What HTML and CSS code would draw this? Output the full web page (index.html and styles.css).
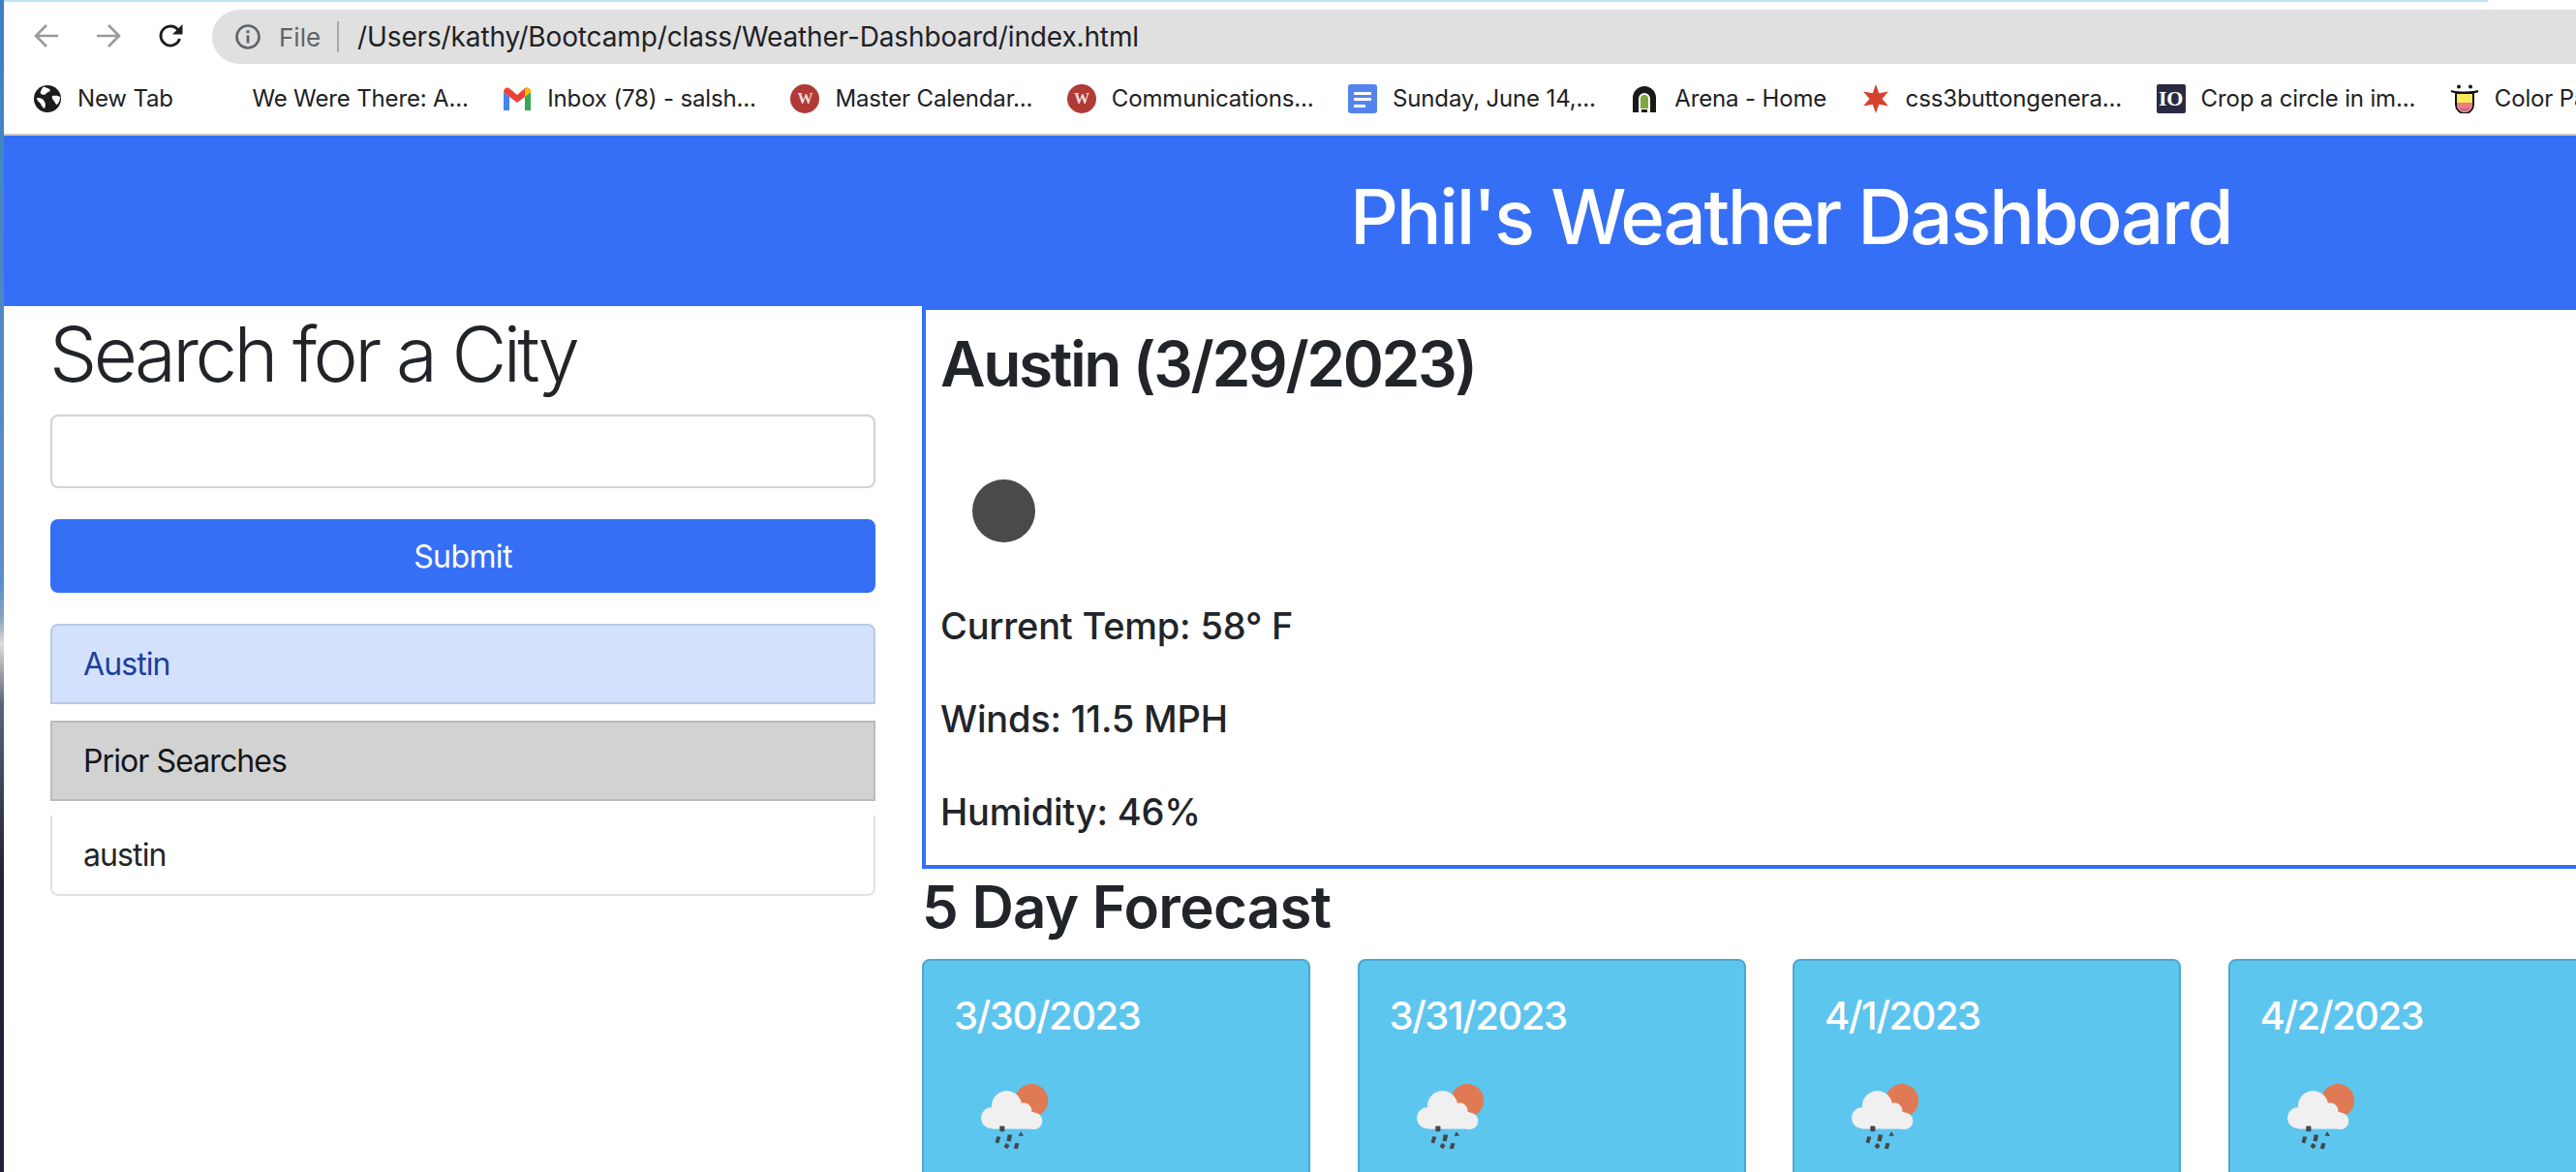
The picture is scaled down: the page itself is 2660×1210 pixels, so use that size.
FILE: index.html
```html
<!DOCTYPE html>
<html lang="en">
<head>
<meta charset="utf-8">
<title>Phil's Weather Dashboard</title>
<link rel="stylesheet" href="styles.css">
</head>
<body>
<div class="desktop-edge"></div>
<div class="window">
  <div class="tab-strip"></div>
  <div class="toolbar">
    <svg class="nav-icon" viewBox="0 0 28 28"><path d="M26 14H3M14 3 3 14l11 11" fill="none" stroke="#9a9a9a" stroke-width="2.6"/></svg>
    <svg class="nav-icon" viewBox="0 0 28 28"><path d="M2 14h23M14 3l11 11-11 11" fill="none" stroke="#9a9a9a" stroke-width="2.6"/></svg>
    <svg class="nav-icon" viewBox="0 0 28 28"><path d="M23.5 17a10 10 0 1 1-2.6-10.2L24.500 10" fill="none" stroke="#1f1f1f" stroke-width="2.8"/><path d="M26.500 2v10.500H16z" fill="#1f1f1f"/></svg>
    <div class="omnibox">
      <svg class="info-icon" viewBox="0 0 26 26"><circle cx="13" cy="13" r="11.500" fill="none" stroke="#5f6368" stroke-width="2.600"/><path d="M13 11.500v8" stroke="#5f6368" stroke-width="2.800"/><circle cx="13" cy="7.800" r="1.700" fill="#5f6368"/></svg>
      <span class="scheme">File</span>
      <span class="omni-sep"></span>
      <span class="url">/Users/kathy/Bootcamp/class/Weather-Dashboard/index.html</span>
    </div>
  </div>
  <div class="bookmarks">
    <div class="bookmark"><svg class="bm-icon" viewBox="0 0 30 30"><circle cx="15" cy="15" r="14" fill="#1c1c1c"/><path d="M11 2.500c3 1 5.500 1.500 7 3.500-1 2.500-4 2-5 4.500-2 .5-4 .5-5.500-1.500C8 7 9 4.500 11 2.500zM4 14c3 0 6 .5 7.500 3 1.500 2.500 2 5 .5 8-3-1.500-3-4-5-6-1.500-1-3-3-3-5zM20 12c3-.5 6-.5 8 1 0 3-1 6-3 8-1.500 0-2-2-3-3.500-1-1.500-3-3-2-5.500z" fill="#fff"/></svg><span>New Tab</span></div>
    <div class="bookmark"><span class="bm-icon"></span><span>We Were There: A...</span></div>
    <div class="bookmark"><svg class="bm-icon" viewBox="0 0 30 30"><path d="M1 8v19h6V13z" fill="#4285f4"/><path d="M29 8v19h-6V13z" fill="#34a853"/><path d="M1 8c0-4 4-6 7-3l7 6 7-6c3-3 7-1 7 3l-6 5-8 6-8-6z" fill="#ea4335"/><path d="M23 13V4.700c3-2 6 0 6 3.300z" fill="#fbbc04"/></svg><span>Inbox (78) - salsh...</span></div>
    <div class="bookmark"><span class="bm-icon badge-w"><span>W</span></span><span>Master Calendar...</span></div>
    <div class="bookmark"><span class="bm-icon badge-w"><span>W</span></span><span>Communications...</span></div>
    <div class="bookmark"><svg class="bm-icon" viewBox="0 0 30 30"><rect width="30" height="30" rx="3" fill="#5384ed"/><path d="M6 8h18v3H6zM6 14h18v3H6zM6 21h12v3H6z" fill="#fff"/></svg><span>Sunday, June 14,...</span></div>
    <div class="bookmark"><svg class="bm-icon" viewBox="0 0 30 30"><path d="M3 29V14a12 12 0 0 1 24 0v15h-6V15a6 6 0 0 0-12 0v14z" fill="#1a1a1a"/><path d="M11 25V15a4 4 0 0 1 8 0v10z" fill="#7fa843"/><rect x="12" y="26" width="6" height="3" fill="#1a1a1a"/></svg><span>Arena - Home</span></div>
    <div class="bookmark"><svg class="bm-icon" viewBox="0 0 30 30"><path d="M15 0l3.300 9.300L28 7.500 21.500 15l6.500 7.500-9.700-1.800L15 30l-3.300-9.300L2 22.500 8.500 15 2 7.500l9.700 1.800z" fill="#d6402c"/></svg><span>css3buttongenera...</span></div>
    <div class="bookmark"><span class="bm-icon badge-io">IO</span><span>Crop a circle in im...</span></div>
    <div class="bookmark"><svg class="bm-icon" viewBox="0 0 30 30"><circle cx="9" cy="2.500" r="2" fill="#111"/><circle cx="21" cy="2.500" r="2" fill="#111"/><path d="M1 7c4 2 24 2 28 0" fill="none" stroke="#111" stroke-width="2"/><path d="M6 9h18v12a9 9 0 0 1-18 0z" fill="#fbe85a" stroke="#111" stroke-width="2"/><path d="M7 19h16v3c0 4-4 7-8 7s-8-3-8-7z" fill="#ee7d7d"/><path d="M9 25h12a8 6 0 0 1-12 0z" fill="#9a6ab0"/></svg><span>Color Pa</span></div>
  </div>
  <header class="page-header">
    <h1 class="page-title">Phil's Weather Dashboard</h1>
  </header>
  <div class="content">
    <aside class="sidebar">
      <h2 class="search-title">Search for a City</h2>
      <input class="search-input" type="text" aria-label="City">
      <button class="submit-btn" type="button">Submit</button>
      <div class="item item-active">Austin</div>
      <div class="item item-heading">Prior Searches</div>
      <div class="item item-history">austin</div>
    </aside>
    <main class="main">
      <section class="current">
        <h2 class="current-title">Austin (3/29/2023)</h2>
        <div class="current-icon"><span class="moon"></span></div>
        <p class="stat">Current Temp: 58° F</p>
        <p class="stat">Winds: 11.5 MPH</p>
        <p class="stat">Humidity: 46%</p>
      </section>
      <h2 class="forecast-title">5 Day Forecast</h2>
      <div class="cards">
        <article class="card"><h3 class="card-date">3/30/2023</h3><svg class="rain-icon" viewBox="0 0 110 100"><use href="#rain"/></svg></article>
        <article class="card"><h3 class="card-date">3/31/2023</h3><svg class="rain-icon" viewBox="0 0 110 100"><use href="#rain"/></svg></article>
        <article class="card"><h3 class="card-date">4/1/2023</h3><svg class="rain-icon" viewBox="0 0 110 100"><use href="#rain"/></svg></article>
        <article class="card"><h3 class="card-date">4/2/2023</h3><svg class="rain-icon" viewBox="0 0 110 100"><use href="#rain"/></svg></article>
      </div>
    </main>
  </div>
</div>
<svg class="defs" width="0" height="0">
  <defs>
    <filter id="soft" x="-10%" y="-10%" width="120%" height="120%"><feGaussianBlur stdDeviation="0.6"/></filter>
    <g id="rain" filter="url(#soft)">
      <circle cx="66.700" cy="36.700" r="16.500" fill="#e07a55"/>
      <g fill="#f0f0f0">
        <circle cx="42" cy="42" r="15"/>
        <circle cx="27" cy="54" r="10.500"/>
        <circle cx="59" cy="47" r="8"/>
        <circle cx="69" cy="57" r="8.500"/>
        <rect x="27" y="48" width="42" height="17"/>
      </g>
      <g fill="#47474c">
        <rect x="35" y="62" width="5" height="5.500" rx="1"/>
        <path d="M32 72.500l4 .5-2 6.500-3.500-1z"/>
        <path d="M43 70.500l4.500.5-1.500 6.500-4-.5z"/>
        <path d="M56 67.500l3 4.500h-5.500z"/>
        <path d="M41.500 79l3.500 2.500-2.500 3.500-3.500-2.500z"/>
        <path d="M50.500 79l4 .5-1.500 5.500-4-.5z"/>
      </g>
    </g>
  </defs>
</svg>
</body>
</html>
```
FILE: styles.css
```css
* {
  box-sizing: border-box;
}

html,
body {
  margin: 0;
  height: 1210px;
  overflow: hidden;
  background: #fff;
}

body {
  display: flex;
  font-family: Inter, "Liberation Sans", sans-serif;
  color: #212529;
}

.defs {
  position: absolute;
}

.desktop-edge {
  flex: 0 0 4px;
  background: linear-gradient(#3f7fc0 0, #5a90c8 50%, #8ea8c0 53%, #e0dcd8 55%, #5a6478 60%, #1e2233 75%, #20243a 100%);
}

.window {
  flex: 1;
  min-width: 0;
  display: flex;
  flex-direction: column;
  overflow: hidden;
}

.tab-strip {
  height: 2px;
  width: 2565px;
  background: #bde6f1;
}

.toolbar {
  height: 66px;
  padding: 8px 0 2px 30px;
  display: flex;
  align-items: center;
}

.nav-icon {
  flex: none;
  width: 28px;
  height: 28px;
  margin-right: 36px;
  margin-top: -2px;
}

.nav-icon:nth-child(3) {
  margin-right: 29px;
}

.omnibox {
  flex: 1;
  height: 56px;
  background: #e0e0e0;
  border-radius: 28px 0 0 28px;
  display: flex;
  align-items: center;
  padding-left: 24px;
  font-size: 28px;
  color: #202124;
}

.info-icon {
  flex: none;
  width: 26px;
  height: 26px;
  margin-right: 19px;
}

.scheme {
  color: #5f6368;
  font-size: 26px;
}

.omni-sep {
  width: 2px;
  height: 32px;
  background: #a8a8a8;
  margin: 0 19px 0 17px;
}

.url {
  letter-spacing: -0.14px;
  white-space: nowrap;
}

.bookmarks {
  height: 72px;
  display: flex;
  align-items: center;
  gap: 35.500px;
  padding: 0 0 3px 30px;
  border-bottom: 2px solid #ccc;
  font-size: 24px;
  letter-spacing: -0.15px;
  color: #202124;
  white-space: nowrap;
}

.bookmark {
  display: flex;
  align-items: center;
  gap: 16px;
}

.bm-icon {
  flex: none;
  display: block;
  width: 30px;
  height: 30px;
}

.badge-w {
  border-radius: 50%;
  background: #b03a36;
  display: flex;
  align-items: center;
  justify-content: center;
  color: #f3dcdc;
  font-size: 16px;
  font-weight: 700;
  font-family: "Liberation Serif", serif;
}

.badge-io {
  background: #2a2a44;
  color: #fff;
  font-family: "Liberation Serif", serif;
  font-weight: 700;
  font-size: 22px;
  line-height: 30px;
  text-align: center;
  border-radius: 2px;
}

.page-header {
  height: 176px;
  flex: none;
  background: #356ff6;
  color: #fff;
  padding: 0 0 10px 1390px;
  display: flex;
  align-items: center;
}

.page-title {
  margin: 0;
  font-size: 78px;
  letter-spacing: -2.3px;
  font-weight: 550;
  white-space: nowrap;
}

.content {
  flex: 1;
  display: grid;
  grid-template-columns: 948px 1fr;
  min-height: 0;
}

.sidebar {
  padding: 0 48px 0 48px;
}

.search-title {
  margin: 0 0 17px;
  padding-top: 5px;
  margin-left: -1px;
  font-size: 78px;
  letter-spacing: -3.600px;
  font-weight: 300;
  line-height: 90px;
  white-space: nowrap;
}

.search-input {
  display: block;
  width: 100%;
  height: 76px;
  border: 2px solid #ced4da;
  border-radius: 8px;
  background: #fff;
  margin-bottom: 32px;
}

.submit-btn {
  display: block;
  width: 100%;
  height: 76px;
  border: 0;
  border-radius: 8px;
  background: #356ff6;
  color: #fff;
  font: inherit;
  font-size: 32px;
  letter-spacing: -0.6px;
  margin-bottom: 32px;
}

.item {
  height: 83px;
  padding-left: 32px;
  display: flex;
  align-items: center;
  font-size: 32px;
  letter-spacing: -0.9px;
  border: 2px solid transparent;
}

.item-active {
  background: #d3e1fc;
  border-color: #b8c9e8;
  color: #1d3f9b;
  border-radius: 8px 8px 0 0;
  margin-bottom: 17px;
}

.item-heading {
  background: #d2d2d2;
  border-color: #bbb;
  color: #141619;
  margin-bottom: 15px;
}

.item-history {
  background: #fff;
  border-color: #dee2e6;
  border-top: 0;
  border-radius: 0 0 8px 8px;
  color: #212529;
}

.main {
  min-width: 0;
}

.current {
  height: 581px;
  width: 1800px;
  border: 4px solid #356ff6;
  padding: 0 0 0 15px;
}

.current-title {
  margin: 0;
  padding-top: 20px;
  font-size: 64px;
  letter-spacing: -2.400px;
  line-height: 72px;
  font-weight: 560;
  white-space: nowrap;
}

.current-icon {
  height: 186px;
  padding: 83px 0 0 33px;
}

.moon {
  display: block;
  width: 65px;
  height: 65px;
  border-radius: 50%;
  background: #4a4a4c;
}

.stat {
  margin: 0;
  height: 96px;
  padding-top: 25px;
  font-size: 38px;
  letter-spacing: -0.2px;
  line-height: 46px;
  font-weight: 500;
  white-space: nowrap;
}

.forecast-title {
  margin: 0;
  height: 93px;
  font-size: 60px;
  letter-spacing: -0.7px;
  line-height: 78px;
  font-weight: 560;
  white-space: nowrap;
}

.cards {
  display: flex;
  gap: 48.500px;
  width: 2000px;
}

.card {
  flex: none;
  width: 401px;
  height: 400px;
  padding: 33px 31px;
  background: #5dc6ee;
  border: 2px solid #4aa9cf;
  border-radius: 8px;
  color: #fff;
}

.card-date {
  margin: 0;
  font-size: 40px;
  letter-spacing: -1.500px;
  line-height: 48px;
  font-weight: 550;
}

.rain-icon {
  display: block;
  width: 114px;
  height: 104px;
  margin: 25px 0 0 11px;
}
```
